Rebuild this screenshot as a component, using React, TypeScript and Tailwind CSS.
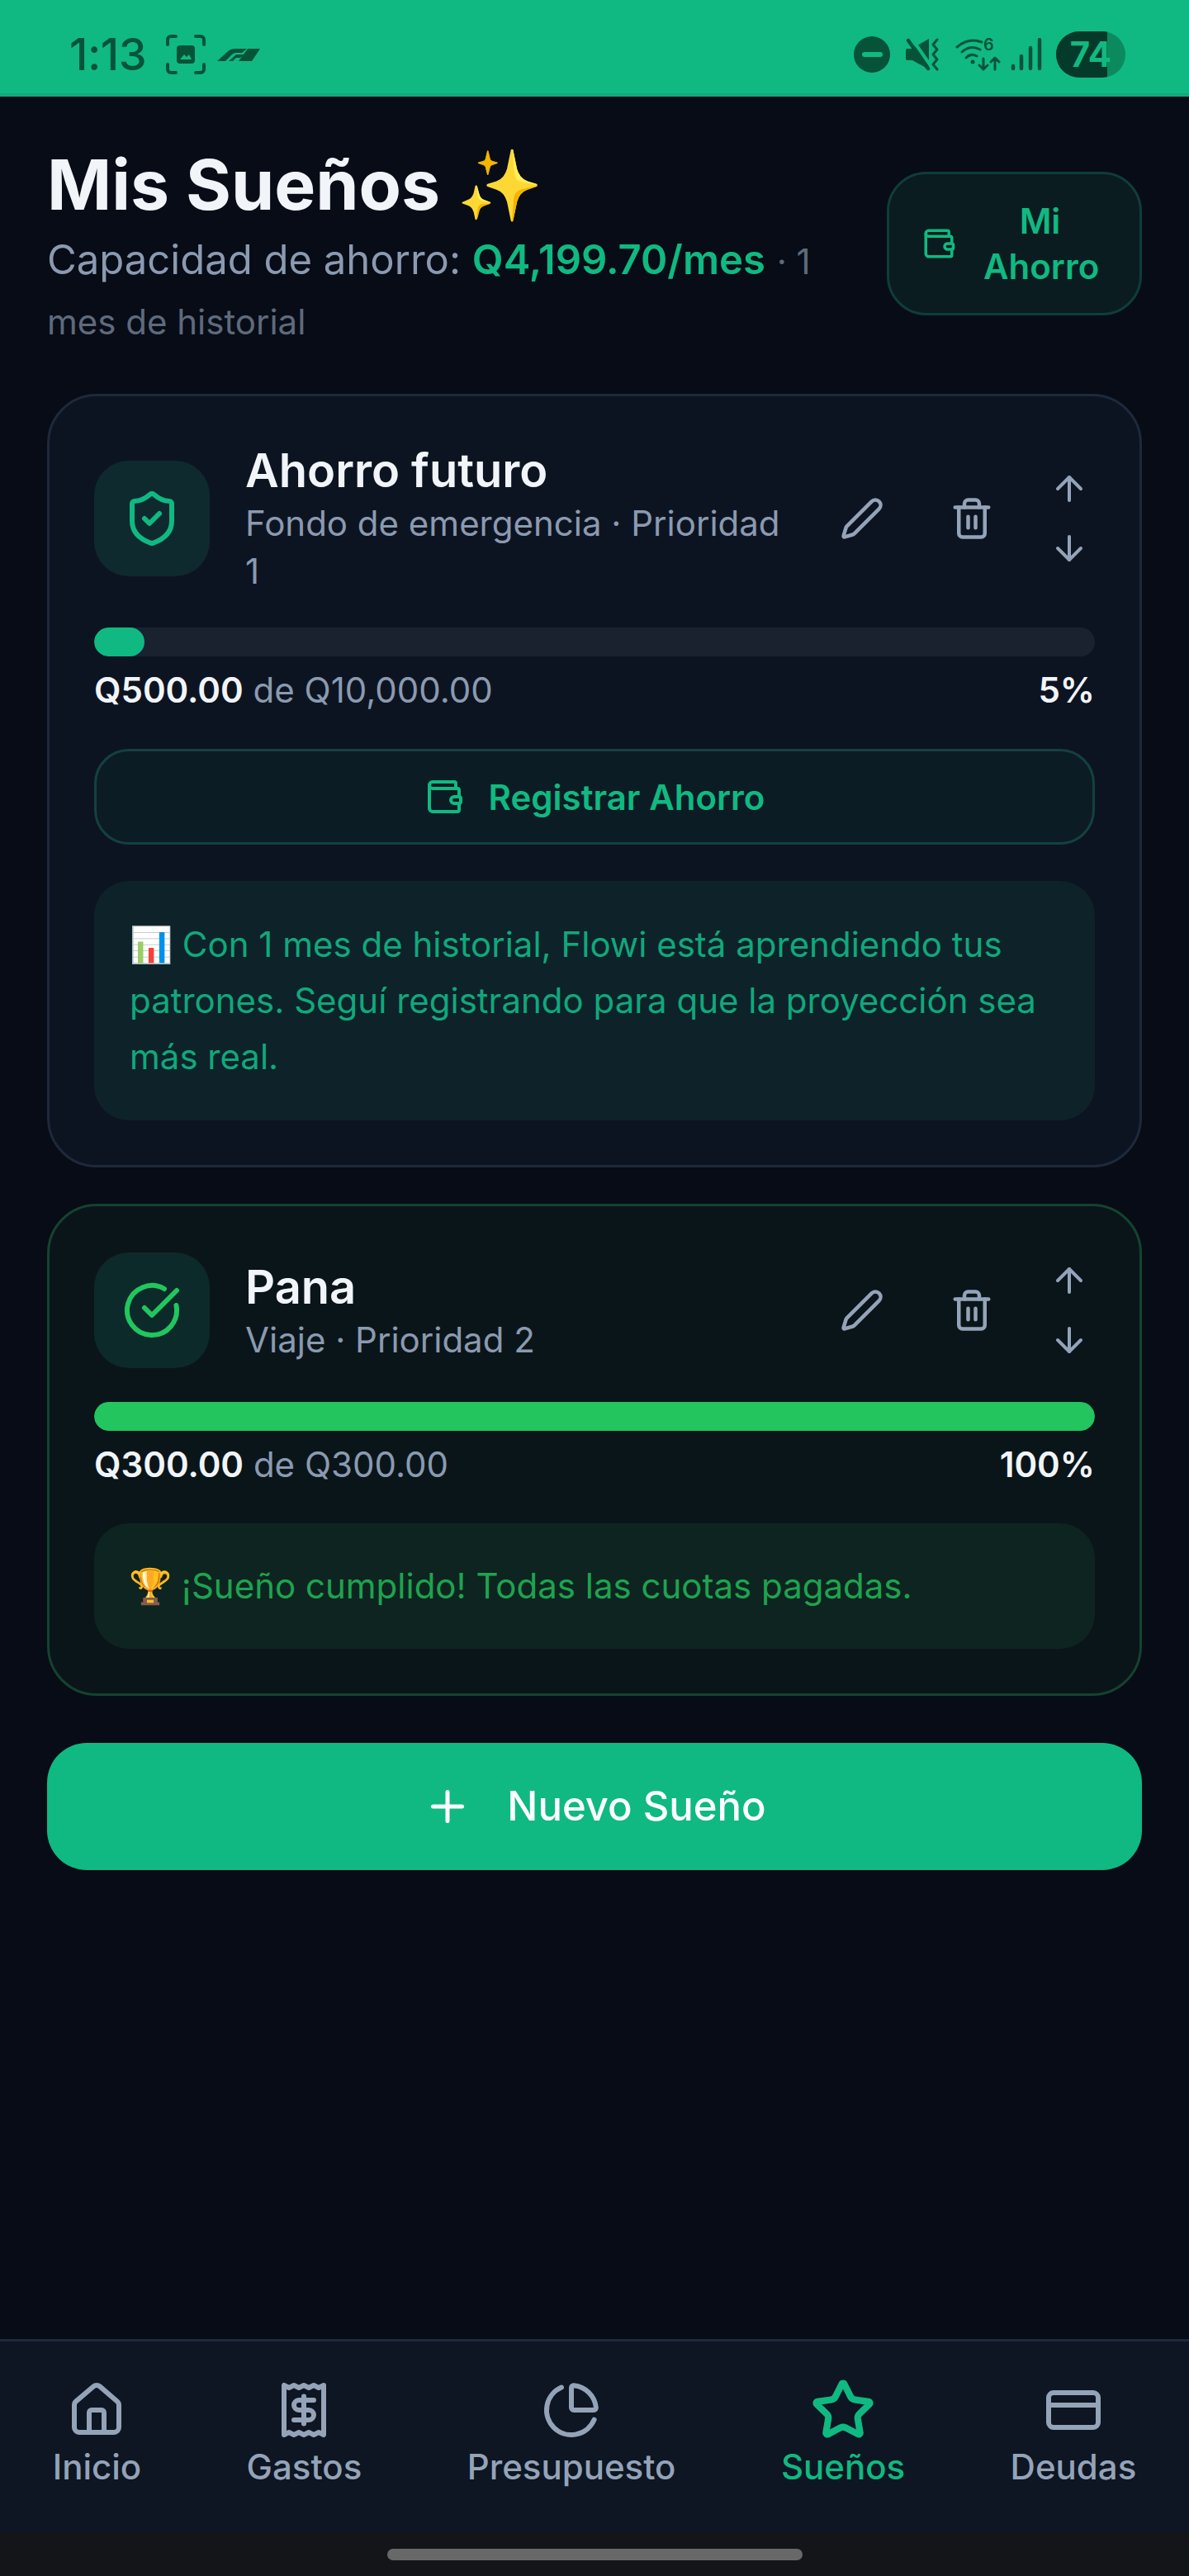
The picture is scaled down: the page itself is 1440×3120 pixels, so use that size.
import {
  ArrowDown,
  ArrowUp,
  ChartPie,
  CircleCheckBig,
  CreditCard,
  House,
  Pen,
  Plus,
  Receipt,
  ShieldCheck,
  Star,
  Trash2,
  Wallet,
} from "lucide-react";
import type { ReactNode } from "react";

const NAV_ITEMS = [
  { label: "Inicio", icon: House },
  { label: "Gastos", icon: Receipt },
  { label: "Presupuesto", icon: ChartPie },
  { label: "Sueños", icon: Star, active: true },
  { label: "Deudas", icon: CreditCard },
];

function StatusBar() {
  return (
    <div className="flex h-[117px] shrink-0 items-center border-b-[4px] border-[#14a97d] bg-[#10b981] pl-[84px] pr-[77px] pt-[19px] text-[#07533a]">
      <span className="text-[54px] font-medium leading-none tracking-[-0.5px] font-['Inter',sans-serif]">1:13</span>
      <svg viewBox="0 0 48 48" className="ml-[24px] h-[48px] w-[48px]" fill="none" stroke="currentColor" strokeWidth="4" strokeLinecap="round">
        <path d="M2 12V6a4 4 0 0 1 4-4h6M36 2h6a4 4 0 0 1 4 4v6M46 36v6a4 4 0 0 1-4 4h-6M12 46H6a4 4 0 0 1-4-4v-6" />
        <rect x="13" y="13" width="22" height="22" rx="4" fill="currentColor" stroke="none" />
        <path d="M17 30l5-6 3 3 3-3 3 6z" fill="#10b981" stroke="none" />
      </svg>
      <svg viewBox="0 0 52 16" className="ml-[14px] h-[16px] w-[52px]" fill="currentColor">
        <path d="M0 16 12 5Q16 1 22 1H36L30 6H23Q20 6 18 8L10 16Z" />
        <path d="M14 16 23 8H33L28 12H23L19 16Z" />
        <path d="M37 1H52L42 16H26Z" />
      </svg>
      <div className="ml-auto flex items-center">
        <span className="flex h-[44px] w-[44px] items-center justify-center rounded-full bg-[#07533a]">
          <span className="h-[6px] w-[25px] rounded-full bg-[#10b981]" />
        </span>
        <svg viewBox="0 0 40 40" className="ml-[19px] h-[40px] w-[40px]" fill="none" stroke="currentColor" strokeLinecap="round" strokeLinejoin="round">
          <path d="M0 15Q0 13 2 13H7L28 1V38L8 27H2Q0 27 0 25z" fill="currentColor" stroke="none" />
          <path d="M7 0L31 35" stroke="#10b981" strokeWidth="4" />
          <path d="M3 3L27 37" strokeWidth="4.5" />
          <path d="M38 2L33 8L38 14L33 20L38 26L33 32L38 38" strokeWidth="3" />
        </svg>
        <svg viewBox="0 0 55 40" className="ml-[20px] h-[40px] w-[55px]" fill="none" stroke="currentColor" strokeWidth="3" strokeLinecap="round" strokeLinejoin="round">
          <path d="M2 11Q16 -1 32 5M8 17Q18 8 30 14M13 24Q19 18 26 22" />
          <circle cx="21" cy="29" r="2.5" fill="currentColor" stroke="none" />
          <path d="M34 25V38M29 33L34 38L39 33M48 38V24M43 29L48 24L53 29" />
          <text x="34" y="15" fontSize="20" fontWeight="600" fill="currentColor" stroke="none" fontFamily="Inter, sans-serif">6</text>
        </svg>
        <svg viewBox="0 0 38 40" className="ml-[12px] h-[40px] w-[38px]" fill="none" stroke="currentColor" strokeWidth="4.5" strokeLinecap="round">
          <path d="M3 34v3M13 22v15M24 12v25M35 2v35" />
        </svg>
        <span className="relative ml-[17px] h-[56px] w-[84px] overflow-hidden rounded-full bg-[#0c8a5f]">
          <span className="absolute inset-y-0 left-0 w-[62px] bg-[#043a2a]" />
          <span className="absolute inset-0 flex items-center justify-center text-[42px] font-bold leading-none text-[#10b981] font-['Inter',sans-serif]">74</span>
        </span>
      </div>
    </div>
  );
}

function IconButton({ children, className }: { children: ReactNode; className: string }) {
  return (
    <button type="button" className={className}>
      {children}
    </button>
  );
}

function GoalCard({
  done,
  icon,
  name,
  detail,
  saved,
  goal,
  percent,
  children,
}: {
  done?: boolean;
  icon: ReactNode;
  name: string;
  detail: string;
  saved: string;
  goal: string;
  percent: string;
  children: ReactNode;
}) {
  return (
    <div
      className={`rounded-[60px] border-[3px] p-[54px] ${
        done ? "border-[#14432f] bg-[#0a151a]" : "border-[#1e293b] bg-[#0d1421]"
      }`}
    >
      <div className="mb-[39px] flex items-center">
        <div
          className={`flex h-[140px] w-[140px] shrink-0 items-center justify-center rounded-[42px] ${
            done ? "bg-[#0c2a29]" : "bg-[#0f2a2f]"
          }`}
        >
          {icon}
        </div>
        <div className="ml-[43px] min-w-0 flex-1">
          <div className="pt-[1px] text-[56px] font-semibold leading-[71px] text-[#f1f5f9]">{name}</div>
          <div className="-mt-[1px] text-[42px] leading-[58px] text-[#8b9ab0]">{detail}</div>
        </div>
        <div className="-mr-[5px] ml-[30px] flex shrink-0 items-center gap-[31px] text-[#94a3b8]">
          <IconButton className="p-[24px]">
            <Pen size={54} strokeWidth={2} />
          </IconButton>
          <IconButton className="p-[24px]">
            <Trash2 size={54} strokeWidth={2} />
          </IconButton>
          <div className="flex flex-col">
            <IconButton className="p-[12px]">
              <ArrowUp size={48} strokeWidth={2} />
            </IconButton>
            <IconButton className="p-[12px]">
              <ArrowDown size={48} strokeWidth={2} />
            </IconButton>
          </div>
        </div>
      </div>
      <div className="h-[35px] overflow-hidden rounded-full bg-[#1a2230]">
        <div className={`h-full rounded-full ${done ? "w-full bg-[#22c55e]" : "w-[61px] bg-[#10b981]"}`} />
      </div>
      <div className="mt-[12px] flex items-center justify-between text-[42px] leading-[58px]">
        <span className="text-[#8b9ab0]">
          <span className="font-semibold text-[#f1f5f9]">{saved}</span> de {goal}
        </span>
        <span className="font-semibold text-[#f1f5f9]">{percent}</span>
      </div>
      {children}
    </div>
  );
}

export default function App() {
  return (
    <div className="flex h-[3120px] w-[1440px] flex-col bg-[#070c16] font-['Inter',sans-serif]">
      <StatusBar />
      <main className="flex-1 px-[57px] pt-[54px]">
        <header className="mb-[53px] flex items-center justify-between">
          <div className="w-[960px]">
            <h1 className="text-[84px] font-bold leading-[105px] text-[#f1f5f9]">Mis Sueños ✨</h1>
            <p className="mt-[2px] text-[49px] leading-[73px] text-[#8b9ab0]">
              Capacidad de ahorro: <span className="font-semibold text-[#10b981]">Q4,199.70/mes</span>{" "}
              <span className="text-[42px] leading-[50px] text-[#5f6a7c]">· 1 mes de historial</span>
            </p>
          </div>
          <button
            type="button"
            className="mb-[6px] flex h-[174px] w-[309px] items-center gap-[33px] rounded-[48px] border-[3px] border-[#0f3d3a] bg-[#0a1c20] pl-[39px] text-[42px] font-semibold leading-[55px] text-[#10b981]"
          >
            <Wallet size={42} strokeWidth={2} />
            <span className="w-[137px] text-center">Mi Ahorro</span>
          </button>
        </header>

        <div className="flex flex-col gap-[44px]">
          <GoalCard
            icon={<ShieldCheck size={72} strokeWidth={2} className="text-[#10b981]" />}
            name="Ahorro futuro"
            detail="Fondo de emergencia · Prioridad 1"
            saved="Q500.00"
            goal="Q10,000.00"
            percent="5%"
          >
            <button
              type="button"
              className="mt-[42px] flex h-[116px] w-full items-center justify-center gap-[30px] rounded-[42px] border-[3px] border-[#124240] bg-[#0c1c24] text-[42px] font-semibold text-[#10b981]"
            >
              <Wallet size={48} strokeWidth={2} />
              Registrar Ahorro
            </button>
            <div className="mt-[44px] rounded-[42px] bg-[#0e2229] p-[43px] text-[42px] leading-[68px] text-[#10a87c]">
              📊 Con 1 mes de historial, Flowi está aprendiendo tus patrones. Seguí registrando para que la proyección sea más real.
            </div>
          </GoalCard>

          <GoalCard
            done
            icon={<CircleCheckBig size={72} strokeWidth={2} className="text-[#22c55e]" />}
            name="Pana"
            detail="Viaje · Prioridad 2"
            saved="Q300.00"
            goal="Q300.00"
            percent="100%"
          >
            <div className="mt-[42px] rounded-[42px] bg-[#0e2420] p-[42px] text-[42px] leading-[68px] text-[#1ea34f]">
              🏆 ¡Sueño cumplido! Todas las cuotas pagadas.
            </div>
          </GoalCard>
        </div>

        <button
          type="button"
          className="mt-[57px] flex h-[154px] w-full items-center justify-center gap-[42px] rounded-[48px] bg-[#10b981] text-[49px] font-medium text-white"
        >
          <Plus size={60} strokeWidth={2} />
          Nuevo Sueño
        </button>
      </main>

      <nav className="flex shrink-0 justify-around border-t-[3px] border-[#1e293b] bg-[#0d1622] pb-[49px] pt-[47px]">
        {NAV_ITEMS.map(({ label, icon: Icon, active }) => (
          <div key={label} className={`flex flex-col items-center ${active ? "text-[#10b981]" : "text-[#94a3b8]"}`}>
            {active ? (
              <Icon size={78} strokeWidth={2.5} className="-m-[3px]" />
            ) : (
              <Icon size={72} strokeWidth={2} />
            )}
            <span className="mt-[3px] text-[42px] font-medium leading-[60px]">{label}</span>
          </div>
        ))}
      </nav>
      <div className="h-[53px] shrink-0 bg-[#131518] pt-[20px]">
        <div className="mx-auto h-[14px] w-[503px] rounded-full bg-[#686868]" />
      </div>
    </div>
  );
}
